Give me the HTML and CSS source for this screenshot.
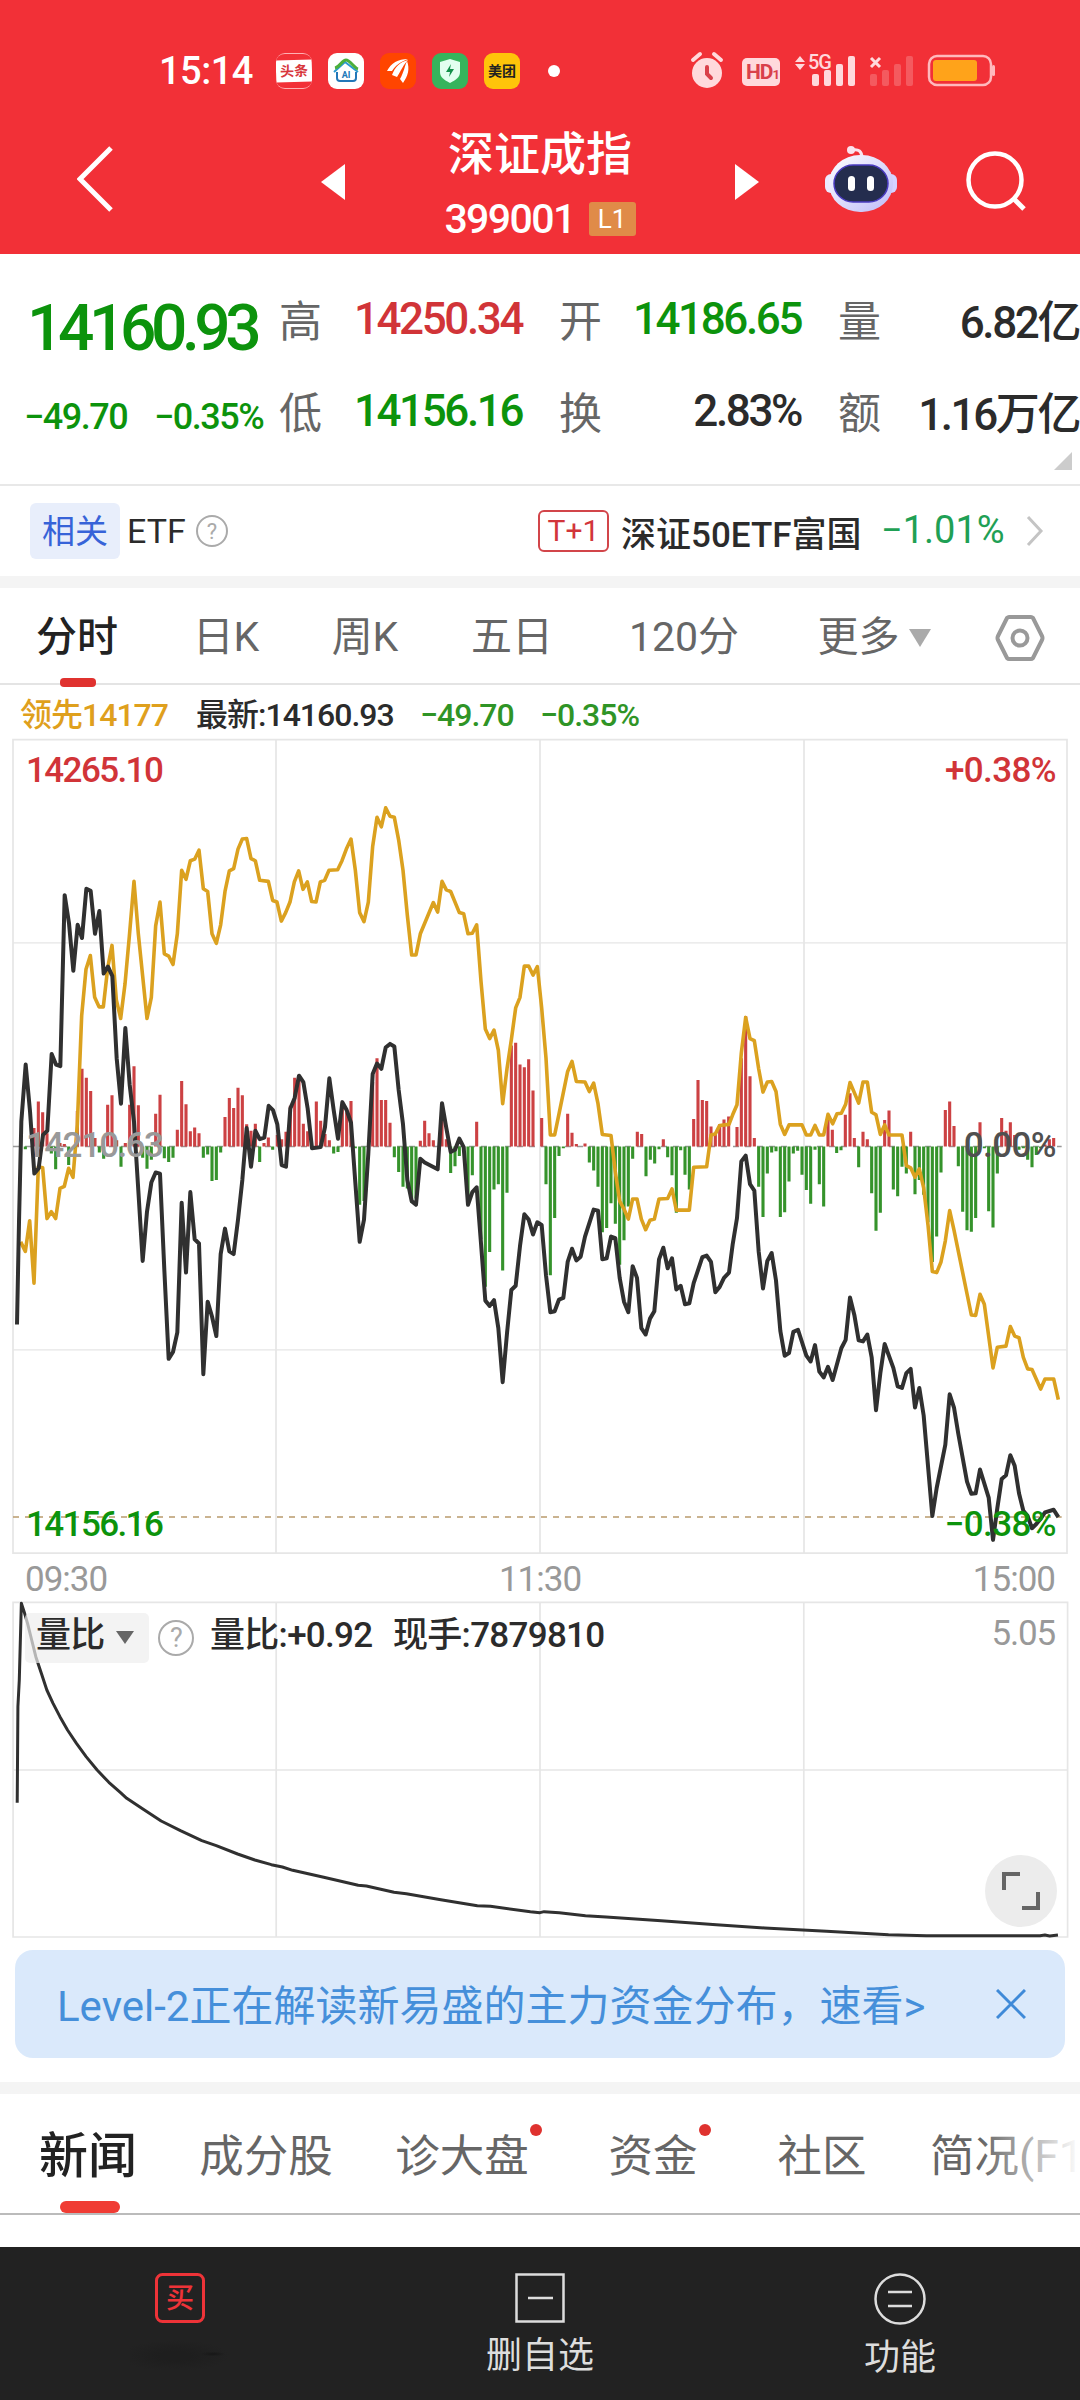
FILE: index.html
```html
<!DOCTYPE html>
<html lang="zh-CN">

<head>
    <meta charset="UTF-8">
    <meta name="viewport" content="width=device-width, initial-scale=1.0">
    <title>深证成指</title>
    <link rel="stylesheet" href="styles.css">
</head>

<body>
    <header class="header">
        <div class="status">
            <span class="clock">15:14</span>
            <div class="apps">
                <span class="app app-news"><b>头条</b></span>
                <span class="app app-home">
                    <svg viewBox="0 0 36 36" fill="none" stroke-width="2">
                        <path d="M6 19L17 9l13 10" stroke="#2a9ad0" />
                        <path d="M7 15C12 14 14 7 18 7s8 8 12 9" stroke="#4caf3c" stroke-width="3" />
                        <path d="M9 19v6q0 3 3 3h13q3 0 3-3v-6" stroke="#2277b8" />
                    </svg>
                    <b>AI</b>
                </span>
                <span class="app app-wing">
                    <svg viewBox="0 0 36 36" fill="#fff">
                        <path d="M7 18C11 10 18 6 28 6 20 9 15 13 12 18z" />
                        <path d="M12 22C15 14 20 9 28 7 23 12 21 18 17 24z" />
                        <path d="M20 26C24 19 25 12 27 8c3 8 1 15-4 22z" />
                    </svg>
                </span>
                <span class="app app-shield">
                    <svg viewBox="0 0 36 36">
                        <path d="M18 6l10 3v10c0 5-4 8-10 11C12 27 8 24 8 19V9z" fill="#e2fff0" />
                        <path d="M19 11l-5 8h4l-1 5 5-8h-4z" fill="#13904a" />
                    </svg>
                </span>
                <span class="app app-food"><b>美团</b></span>
            </div>
            <i class="more-dot"></i>
            <svg class="status-icons" width="310" height="46" viewBox="0 0 310 46">
                <g fill="#ffd9dc">
                    <circle cx="17" cy="25" r="15" />
                    <path d="M3 12l7-6M31 12l-7-6" stroke="#ffd9dc" stroke-width="4" stroke-linecap="round" />
                    <path d="M17 19v7l4 4" stroke="#d9404a" stroke-width="4" fill="none" stroke-linecap="round" />
                    <rect x="52" y="10" width="38" height="28" rx="5" />
                    <path d="M105 14l5-6 5 6zM105 16l5 6 5-6z" />
                    <rect x="122" y="26" width="7" height="12" rx="2" />
                    <rect x="134" y="22" width="7" height="16" rx="2" />
                    <rect x="146" y="16" width="7" height="22" rx="2" />
                    <rect x="158" y="8" width="7" height="30" rx="2" />
                </g>
                <text x="56" y="31" class="hd">HD<tspan class="hd-sub">1</tspan></text>
                <text x="118" y="21" class="five-g">5G</text>
                <path d="M181 10l9 9M190 10l-9 9" stroke="#ffd9dc" stroke-width="3" />
                <g fill="#fff" opacity=".2">
                    <rect x="180" y="26" width="7" height="12" rx="2" />
                    <rect x="192" y="22" width="7" height="16" rx="2" />
                    <rect x="204" y="16" width="7" height="22" rx="2" />
                    <rect x="216" y="8" width="7" height="30" rx="2" />
                </g>
                <rect x="239" y="8" width="62" height="29" rx="8" fill="none" stroke="#ffb9bd" stroke-width="2.5" />
                <rect x="243" y="12" width="44" height="21" rx="3" fill="#ffa31a" />
                <rect x="302" y="17" width="3" height="11" rx="1.5" fill="#ffb9bd" />
            </svg>
        </div>
        <nav class="nav">
            <svg class="back" width="36" height="66" viewBox="0 0 36 66" fill="none" stroke="#fff" stroke-width="5">
                <path d="M34 2L3 33l31 31" />
            </svg>
            <svg class="prev" width="24" height="36" viewBox="0 0 24 36" fill="#fff">
                <path d="M24 0v36L0 18z" />
            </svg>
            <div class="title">
                <h1>深证成指</h1>
                <p><span class="code">399001</span><span class="level">L1</span></p>
            </div>
            <svg class="next" width="24" height="36" viewBox="0 0 24 36" fill="#fff">
                <path d="M0 0v36l24-18z" />
            </svg>
            <svg class="robot" width="72" height="68" viewBox="0 0 72 68">
                <defs>
                    <linearGradient id="shell" x1="0" y1="0" x2="1" y2="1">
                        <stop offset="0" stop-color="#fff" />
                        <stop offset="1" stop-color="#bdbaf8" />
                    </linearGradient>
                </defs>
                <path d="M27 5q10-2 10 8" fill="none" stroke="#fbe3ee" stroke-width="3" />
                <circle cx="26" cy="5" r="4" fill="#fbe3ee" />
                <rect x="0" y="29" width="12" height="19" rx="6" fill="#eceaff" />
                <rect x="60" y="29" width="12" height="19" rx="6" fill="#d5d2ff" />
                <rect x="4" y="10" width="64" height="57" rx="31" ry="28" fill="url(#shell)" />
                <rect x="9" y="20" width="54" height="37" rx="19" fill="#242d4e" stroke="#4a3bc0" stroke-width="1.5" />
                <rect x="23" y="31" width="7" height="15" rx="3.5" fill="#fff" />
                <rect x="42" y="31" width="7" height="15" rx="3.5" fill="#fff" />
            </svg>
            <svg class="search" width="62" height="62" viewBox="0 0 62 62" fill="none" stroke="#fff" stroke-width="4.5">
                <circle cx="29" cy="29" r="26.5" />
                <path d="M48 48l10 10" stroke-width="5" />
            </svg>
        </nav>
    </header>

    <section class="quote">
        <div class="price down">
            <strong>14160.93</strong>
            <p><span>−49.70</span><span>−0.35%</span></p>
        </div>
        <dl class="stats">
            <div><dt>高</dt><dd class="up">14250.34</dd></div>
            <div><dt>开</dt><dd class="down">14186.65</dd></div>
            <div><dt>量</dt><dd>6.82亿</dd></div>
            <div><dt>低</dt><dd class="down">14156.16</dd></div>
            <div><dt>换</dt><dd>2.83%</dd></div>
            <div><dt>额</dt><dd>1.16万亿</dd></div>
        </dl>
        <i class="corner"></i>
    </section>

    <section class="related">
        <span class="related-tag">相关</span>
        <span class="etf">ETF</span>
        <span class="help">?</span>
        <span class="t1">T+1</span>
        <span class="fund">深证50ETF富国</span>
        <span class="fund-change">−1.01%</span>
        <svg width="18" height="32" viewBox="0 0 18 32" fill="none" stroke="#c4c4c4" stroke-width="3">
            <path d="M2 2l13 14L2 30" />
        </svg>
    </section>

    <div class="periods">
        <span class="active">分时</span>
        <span>日K</span>
        <span>周K</span>
        <span>五日</span>
        <span>120分</span>
        <span class="more">更多<i></i></span>
        <span class="settings">
            <svg width="50" height="48" viewBox="0 0 50 48" fill="none" stroke="#999" stroke-width="4">
                <path d="M14 3h22q1 0 2 1l9 18q1 2 0 4l-9 18q-1 1-2 1H14q-1 0-2-1L3 26q-1-2 0-4l9-18q1-1 2-1z" />
                <circle cx="25" cy="24" r="7.5" />
            </svg>
        </span>
    </div>

    <div class="legend">
        <span class="lead">领先14177</span>
        <span class="last">最新:14160.93</span>
        <span class="diff">−49.70</span>
        <span class="rate">−0.35%</span>
    </div>

    <section class="chart">
        <svg width="1080" height="830" viewBox="0 0 3240 1568" preserveAspectRatio="none" fill="none">
            <g class="grid">
                <path d="M39 18H3201V1555H39zM828 18V1555M1620 18V1555M2412 18V1555" />
                <path d="M39 402H3201M39 1171H3201" class="thin" />
            </g>
            <path d="M39 787H3185" class="zero" />
            <path id="bars-up" class="bars-up" />
            <path id="bars-down" class="bars-down" />
            <path d="M39 1487H3185" class="low" />
            <polyline class="line-lead" points="62,967 76,985 89,927 102,1045 115,825 128,827 141,923 154,910 167,923 180,866 193,862 206,828 219,845 232,745 245,540 258,452 271,426 284,505 297,523 310,523 323,450 336,407 349,510 362,545 375,480 388,390 402,286 415,385 428,465 441,545 454,505 467,370 480,325 493,423 506,427 519,443 532,385 545,265 558,282 571,247 584,244 597,227 610,300 623,305 636,385 649,403 662,368 675,305 688,266 701,262 714,225 727,206 740,205 753,243 766,247 779,284 805,286 818,322 831,325 844,361 857,345 870,325 883,287 896,266 909,301 922,287 935,324 948,325 961,287 974,284 987,265 1013,264 1026,247 1039,225 1053,206 1066,265 1079,345 1092,362 1105,325 1118,220 1131,165 1144,183 1157,147 1170,163 1183,165 1196,208 1209,265 1222,350 1235,425 1248,425 1261,385 1300,326 1313,344 1326,286 1339,302 1352,305 1378,345 1391,347 1404,385 1417,384 1430,368 1443,475 1456,565 1469,583 1482,567 1495,605 1508,706 1521,640 1534,585 1547,525 1560,505 1573,446 1586,446 1599,463 1612,447 1625,525 1638,620 1651,765 1664,765 1677,725 1703,645 1716,626 1729,664 1755,665 1768,683 1781,667 1794,706 1807,764 1833,766 1846,835 1859,890 1872,905 1885,924 1898,886 1911,886 1924,924 1937,944 1950,926 1963,924 1977,886 2003,885 2016,867 2029,907 2068,907 2081,826 2120,825 2133,765 2146,763 2159,747 2187,745 2198,727 2211,708 2224,610 2237,543 2250,583 2263,587 2276,640 2289,684 2302,665 2315,664 2328,683 2341,745 2354,764 2367,746 2406,746 2419,765 2432,765 2445,747 2458,765 2471,765 2484,726 2498,744 2511,725 2524,724 2537,707 2550,666 2563,685 2576,705 2589,665 2602,665 2615,722 2628,727 2641,764 2654,746 2667,765 2706,765 2719,823 2732,827 2745,845 2758,829 2771,865 2784,935 2797,1023 2810,1025 2823,1005 2836,965 2849,908 2862,945 2901,1065 2914,1105 2927,1106 2940,1066 2953,1085 2979,1205 2992,1166 3018,1164 3031,1127 3044,1145 3057,1148 3070,1185 3083,1207 3096,1208 3122,1245 3135,1226 3161,1226 3175,1265" />
            <polyline class="line-price" points="51,1123 57,930 64,740 77,632 90,720 103,838 116,828 129,765 142,757 155,612 168,632 181,635 194,312 207,365 220,455 233,368 246,393 259,300 272,304 285,385 298,342 311,460 324,447 337,465 350,620 363,706 376,563 389,670 402,740 415,870 428,1003 441,910 454,855 467,836 480,838 493,1020 506,1188 519,1175 532,1138 545,893 558,1025 571,873 584,962 597,970 610,1217 623,1080 636,1108 649,1145 662,990 675,942 688,985 701,990 714,925 727,850 740,752 753,825 766,757 779,773 793,770 806,710 819,718 832,745 845,822 858,825 871,715 884,695 897,653 910,665 923,715 936,790 962,788 975,750 988,658 1001,718 1014,772 1027,703 1040,718 1053,742 1066,855 1079,967 1092,925 1105,800 1118,650 1131,630 1144,640 1157,600 1170,593 1183,598 1196,680 1209,745 1222,850 1235,890 1248,897 1261,810 1274,817 1313,830 1326,705 1339,752 1352,797 1365,793 1378,772 1391,788 1404,897 1417,873 1430,864 1443,970 1456,1078 1469,1088 1482,1077 1495,1130 1508,1232 1521,1140 1534,1058 1547,1050 1560,975 1573,915 1586,925 1599,953 1612,930 1625,935 1638,1030 1651,1100 1664,1098 1677,1076 1690,1073 1703,1005 1716,980 1729,1002 1742,995 1755,957 1781,906 1794,908 1807,1000 1820,998 1833,957 1846,960 1859,1035 1872,1080 1885,1100 1898,1013 1911,1035 1924,1130 1937,1142 1950,1112 1963,1098 1977,1000 1990,978 2003,1017 2016,998 2029,1057 2042,1050 2055,1085 2068,1083 2081,1045 2107,996 2120,993 2133,1005 2146,1062 2159,1052 2172,1035 2187,1025 2198,972 2211,922 2224,815 2237,804 2250,858 2263,870 2276,985 2289,1055 2302,1003 2315,988 2328,1040 2341,1135 2354,1182 2367,1177 2380,1137 2394,1133 2419,1182 2432,1193 2445,1162 2458,1212 2471,1223 2484,1203 2498,1228 2524,1168 2537,1152 2550,1072 2563,1105 2576,1153 2589,1155 2602,1142 2615,1185 2628,1285 2641,1215 2654,1160 2680,1205 2693,1240 2706,1243 2719,1215 2732,1207 2745,1280 2758,1243 2771,1295 2797,1485 2810,1432 2836,1350 2849,1255 2862,1280 2875,1330 2901,1420 2914,1443 2927,1442 2940,1397 2966,1450 2979,1530 2992,1470 3005,1415 3018,1408 3031,1370 3044,1390 3057,1442 3070,1475 3083,1485 3096,1508 3109,1500 3122,1490 3135,1478 3161,1473 3175,1487" />
        </svg>
        <div class="scale scale-left">
            <span class="up">14265.10</span>
            <span class="base">14210.63</span>
            <span class="down">14156.16</span>
        </div>
        <div class="scale scale-right">
            <span class="up">+0.38%</span>
            <span class="mid">0.00%</span>
            <span class="down">−0.38%</span>
        </div>
    </section>

    <div class="times">
        <span>09:30</span>
        <span>11:30</span>
        <span>15:00</span>
    </div>

    <section class="volume">
        <svg width="1080" height="340" viewBox="0 180 1568 1020" preserveAspectRatio="none" fill="none">
            <g class="grid">
                <path d="M19 187H1550V1191H19zM19 690H1550M401 187V1191M784 187V1191M1167 187V1191" />
            </g>
            <polyline class="line-ratio" points="25,788 26,500 28,420 31,190 35,215 40,250 46,300 52,350 60,400 68,450 77,490 87,530 98,570 111,610 125,650 141,690 158,727 175,758 184,775 208,808 234,843 262,872 293,902 314,917 345,942 370,960 394,974 410,981 425,991 470,1012 520,1036 532,1038 572,1057 590,1061 640,1079 693,1097 712,1099 770,1115 784,1118 790,1115 812,1118 850,1127 880,1131 960,1142 1040,1154 1110,1164 1200,1174 1290,1184 1345,1187 1510,1187 1517,1185 1524,1188 1536,1185" />
        </svg>
        <div class="volume-info">
            <span class="picker">量比<i></i></span>
            <span class="help help-lg">?</span>
            <span class="ratio">量比:+0.92</span>
            <span>现手:7879810</span>
        </div>
        <span class="volume-max">5.05</span>
        <span class="expand">
            <svg width="42" height="42" viewBox="0 0 42 42" fill="none" stroke="#666" stroke-width="4">
                <path d="M4 20V4h16M38 22v16H22" />
            </svg>
        </span>
    </section>

    <div class="banner">
        <span>Level-2正在解读新易盛的主力资金分布，速看&gt;</span>
        <svg width="30" height="30" viewBox="0 0 30 30" fill="none" stroke="#3f8ad8" stroke-width="3">
            <path d="M1 1l28 28M29 1L1 29" />
        </svg>
    </div>

    <div class="topics">
        <span class="active">新闻</span>
        <span>成分股</span>
        <span><em>诊大盘<i></i></em></span>
        <span><em>资金<i></i></em></span>
        <span>社区</span>
        <span class="last-topic">简况(F10)</span>
    </div>

    <footer class="toolbar">
        <div>
            <svg width="50" height="50" viewBox="0 0 50 50" fill="none">
                <rect x="1.5" y="1.5" width="47" height="47" rx="6" stroke="#ee3338" stroke-width="3" />
                <text x="25" y="35" class="buy">买</text>
            </svg>
            <i class="smudge"></i>
        </div>
        <div>
            <svg width="50" height="50" viewBox="0 0 50 50" fill="none" stroke="#ddd" stroke-width="2.5">
                <path d="M1.5 1.5h47v47h-47zM13 25h25" />
            </svg>
            <span>删自选</span>
        </div>
        <div>
            <svg width="52" height="52" viewBox="0 0 52 52" fill="none" stroke="#ddd" stroke-width="2.5">
                <circle cx="26" cy="26" r="24.5" />
                <path d="M14 19h24M14 33h24" />
            </svg>
            <span>功能</span>
        </div>
    </footer>
    <script src="chart.js"></script>
</body>

</html>
```

FILE: styles.css
```css
* {
    box-sizing: border-box;
}

body {
    margin: 0;
    width: 1080px;
    height: 2400px;
    overflow: hidden;
    background-color: #fff;
    color: #2b2b2b;
    font-family: Roboto, "Noto Sans CJK SC", sans-serif;
}

h1,
p,
dl,
dd {
    margin: 0;
}

span,
strong {
    white-space: nowrap;
}

svg {
    display: block;
    flex: none;
}

.up {
    color: #d13438;
}

.down {
    color: #0c930c;
}

/* header */
.header {
    height: 254px;
    padding-top: 48px;
    background-color: #f23037;
    color: #fff;
}

.status {
    display: flex;
    align-items: center;
    height: 46px;
    padding-left: 159px;
}

.clock {
    width: 117px;
    font-size: 38px;
    font-weight: 500;
    letter-spacing: -.5px;
}

.apps {
    display: flex;
    gap: 16px;
}

.app {
    position: relative;
    display: flex;
    align-items: center;
    justify-content: center;
    width: 36px;
    height: 36px;
    border-radius: 9px;
    overflow: hidden;
}

.app svg {
    width: 36px;
    height: 36px;
}

.app b {
    font-size: 14px;
    line-height: 22px;
}

.app-news {
    border-top: 1px solid #ffb0b3;
    border-bottom: 1px solid #ffb0b3;
}

.app-news b {
    width: 36px;
    background-color: #fff;
    color: #d8363c;
    text-align: center;
    transform: rotate(-2deg);
}

.app-home {
    background-color: #fff;
}

.app-home b {
    position: absolute;
    top: 11px;
    font-size: 9px;
    color: #2277b8;
}

.app-wing {
    background-color: #ff4500;
}

.app-shield {
    background-color: #36b45c;
}

.app-food {
    background-color: #ffc40a;
    color: #222;
}

.more-dot {
    width: 12px;
    height: 12px;
    margin-left: 28px;
    border-radius: 50%;
    background-color: #fff;
}

.status-icons {
    margin-left: 130px;
}

.hd {
    font-size: 21px;
    font-weight: 700;
    letter-spacing: -1px;
    fill: #d9404a;
}

.hd-sub {
    font-size: 13px;
}

.five-g {
    font-size: 20px;
    font-weight: 500;
    letter-spacing: -1px;
    fill: #ffd9dc;
}

.nav {
    display: flex;
    align-items: center;
    height: 160px;
    padding-top: 10px;
}

.back {
    margin-left: 77px;
}

.prev {
    margin-left: 208px;
    margin-top: 5px;
}

.next {
    margin-top: 5px;
}

.title {
    width: 390px;
    margin-top: 9px;
    text-align: center;
}

.title h1 {
    font-size: 46px;
    font-weight: 500;
    line-height: 60px;
}

.title p {
    display: flex;
    align-items: center;
    justify-content: center;
    gap: 14px;
    height: 50px;
    margin-top: 10px;
}

.code {
    font-size: 41px;
    font-weight: 500;
    letter-spacing: -1.6px;
}

.level {
    width: 47px;
    height: 34px;
    border-radius: 3px;
    background-color: #e08b48;
    font-size: 26px;
    line-height: 34px;
    text-align: center;
}

.robot {
    margin-left: 66px;
}

.search {
    margin-left: 69px;
    margin-top: 6px;
}

/* quote */
.quote {
    position: relative;
    display: flex;
    height: 232px;
    padding-top: 19px;
    border-bottom: 2px solid #e8e8e8;
}

.price {
    width: 280px;
    padding-left: 27px;
}

.price strong {
    display: block;
    height: 92px;
    padding-top: 19px;
    font-size: 64px;
    font-weight: 500;
    line-height: 74px;
    letter-spacing: -5.4px;
}

.price p {
    display: flex;
    gap: 27px;
    margin-left: -3px;
    font-size: 36px;
    font-weight: 500;
    line-height: 104px;
    letter-spacing: -1.5px;
}

.stats {
    display: grid;
    grid-template-columns: 242px 241px 240px;
    grid-template-rows: 92px 92px;
    column-gap: 38px;
}

.stats div {
    display: flex;
    align-items: center;
    justify-content: space-between;
    margin-left: -1px;
}

.stats dt {
    padding-bottom: 3px;
    color: #666;
    font-size: 43px;
}

.stats dd {
    font-size: 44px;
    font-weight: 500;
    letter-spacing: -2.4px;
    white-space: nowrap;
}

.corner {
    position: absolute;
    right: 8px;
    bottom: 14px;
    border-left: 18px solid transparent;
    border-bottom: 18px solid #ccc;
}

/* related etf */
.related {
    display: flex;
    align-items: center;
    height: 102px;
    padding-left: 30px;
    border-bottom: 12px solid #f4f4f4;
}

.related-tag {
    width: 90px;
    height: 56px;
    border-radius: 6px;
    background-color: #e8eefb;
    color: #3763d8;
    font-size: 33px;
    line-height: 57px;
    text-align: center;
}

.etf {
    width: 69px;
    margin-left: 7px;
    font-size: 34px;
}

.help {
    width: 32px;
    height: 32px;
    border: 2px solid #aaa;
    border-radius: 50%;
    color: #aaa;
    font-size: 22px;
    line-height: 29px;
    text-align: center;
}

.t1 {
    width: 71px;
    height: 42px;
    margin-left: 310px;
    border: 2px solid #d2454a;
    border-radius: 6px;
    color: #d2353a;
    font-size: 30px;
    line-height: 38px;
    text-align: center;
}

.fund {
    width: 261px;
    margin-left: 12px;
    font-size: 35px;
    font-weight: 500;
}

.fund-change {
    width: 144px;
    margin-left: -1px;
    margin-right: 1px;
    padding-bottom: 2px;
    color: #1fa055;
    font-size: 38px;
}

/* period tabs */
.periods {
    display: grid;
    grid-template-columns: 154px 144px 134px 160px 184px 196px 96px;
    height: 97px;
    border-bottom: 2px solid #e4e4e4;
    color: #666;
    font-size: 41px;
    line-height: 99px;
    text-align: center;
}

.periods .active {
    position: relative;
    color: #222;
    font-weight: 500;
}

.periods .active::after {
    content: "";
    position: absolute;
    left: 60px;
    bottom: 0;
    width: 36px;
    height: 9px;
    border-radius: 4px;
    background-color: #e0322f;
}

.more {
    display: flex;
    align-items: center;
    justify-content: center;
    gap: 9px;
}

.more i {
    border: 11px solid transparent;
    border-top: 18px solid #aaa;
    border-bottom: 0;
}

.settings {
    display: flex;
    align-items: center;
    justify-content: center;
}

.legend {
    display: flex;
    align-items: center;
    height: 45px;
    padding: 14px 0 0 20px;
    font-size: 32px;
    line-height: 30px;
    font-weight: 500;
}

.legend span {
    letter-spacing: -1px;
}

.lead {
    width: 176px;
    color: #dfa01d;
}

.last {
    width: 224px;
}

.diff {
    width: 120px;
    color: #2f9426;
}

.rate {
    color: #2f9426;
}

/* main chart */
.chart,
.volume {
    position: relative;
}

.chart path,
.chart polyline,
.volume path,
.volume polyline {
    vector-effect: non-scaling-stroke;
}

.grid {
    stroke: #e6e6e6;
    stroke-width: 1.7;
}

.thin {
    stroke-width: 1.2;
}

.zero {
    stroke: #999;
    stroke-width: 1.5;
    stroke-dasharray: 6 6;
}

.low {
    stroke: #b99a6c;
    stroke-width: 1.5;
    stroke-dasharray: 6 6;
}

.bars-up {
    stroke: #cc4143;
    stroke-width: 3.1;
}

.bars-down {
    stroke: #35932b;
    stroke-width: 3.1;
}

.line-lead {
    stroke: #dba11f;
    stroke-width: 3.6;
    stroke-linejoin: round;
}

.line-price {
    stroke: #303030;
    stroke-width: 4;
    stroke-linejoin: round;
}

.scale {
    position: absolute;
    top: 21px;
    bottom: 15px;
    display: flex;
    flex-direction: column;
    justify-content: space-between;
    font-size: 35px;
    font-weight: 500;
    line-height: 40px;
    letter-spacing: -1.6px;
}

.scale-left {
    left: 26px;
}

.scale-right {
    right: 24px;
    align-items: flex-end;
    letter-spacing: -.6px;
}

.base {
    margin-bottom: 4px;
    color: #999;
}

.mid {
    margin-bottom: 4px;
    color: #505050;
}

.times {
    display: grid;
    grid-template-columns: 1fr 1fr 1fr;
    height: 40px;
    padding: 0 25px;
    color: #999;
    font-size: 35px;
    line-height: 40px;
    letter-spacing: -1px;
}

.times span:nth-child(2) {
    text-align: center;
}

.times span:nth-child(3) {
    text-align: right;
}

/* volume ratio chart */
.line-ratio {
    stroke: #303030;
    stroke-width: 3;
    stroke-linejoin: round;
}

.volume-info {
    position: absolute;
    top: 13px;
    left: 25px;
    display: flex;
    align-items: center;
    height: 50px;
    font-size: 35px;
    font-weight: 500;
    line-height: 46px;
    letter-spacing: -.7px;
}

.volume-info > span {
    padding-bottom: 4px;
}

.volume-info .picker {
    display: flex;
    align-items: center;
    gap: 11px;
    width: 124px;
    height: 50px;
    padding-left: 11px;
    border-radius: 5px;
    background-color: rgba(238, 238, 238, .7);
}

.picker i {
    margin-top: 2px;
    border: 9px solid transparent;
    border-top: 13px solid #666;
    border-bottom: 0;
}

.volume-info .help-lg {
    width: 36px;
    height: 36px;
    margin: 0 16px 0 9px;
    padding: 0;
    font-size: 27px;
    font-weight: 400;
    line-height: 32px;
}

.ratio {
    width: 183px;
}

.volume-max {
    position: absolute;
    top: 13px;
    right: 25px;
    color: #999;
    font-size: 35px;
    letter-spacing: -1.2px;
}

.expand {
    position: absolute;
    right: 23px;
    bottom: 13px;
    display: flex;
    align-items: center;
    justify-content: center;
    width: 72px;
    height: 72px;
    border-radius: 50%;
    background-color: #ececec;
}

/* banner */
.banner {
    display: flex;
    align-items: center;
    justify-content: space-between;
    height: 108px;
    margin: 10px 15px 24px;
    padding: 0 39px 0 42px;
    border-radius: 18px;
    background-color: #dae9fb;
    color: #458fda;
    font-size: 42px;
}

.banner span {
    padding-bottom: 3px;
}

/* news tabs */
.topics {
    position: relative;
    display: grid;
    grid-template-columns: 176px 180px 212px 170px 168px 174px;
    height: 133px;
    overflow: hidden;
    border-top: 12px solid #f4f4f4;
    border-bottom: 2px solid #bbb;
    color: #666;
    font-size: 44.5px;
    line-height: 126px;
    text-align: center;
}

.topics::after {
    content: "";
    position: absolute;
    top: 0;
    right: 0;
    width: 100px;
    height: 119px;
    background: linear-gradient(to right, rgba(255, 255, 255, 0), #fff);
}

.topics .active {
    position: relative;
    height: 119px;
    color: #222;
    font-size: 49px;
    font-weight: 500;
}

.topics .active::after {
    content: "";
    position: absolute;
    left: 60px;
    bottom: 0;
    width: 60px;
    height: 12px;
    border-radius: 6px;
    background-color: #f03c34;
}

.topics em {
    position: relative;
    font-style: normal;
}

.topics em i {
    position: absolute;
    top: -7px;
    right: -13px;
    width: 12px;
    height: 12px;
    border-radius: 50%;
    background-color: #df322f;
}

.topics .last-topic {
    padding-left: 24px;
    text-align: left;
}

/* bottom toolbar */
.toolbar {
    display: grid;
    grid-template-columns: 1fr 1fr 1fr;
    height: 153px;
    margin-top: 32px;
    background-color: #222;
    color: #ddd;
    font-size: 36px;
}

.toolbar div {
    display: flex;
    flex-direction: column;
    align-items: center;
    padding-top: 26px;
}

.toolbar svg {
    margin-bottom: 10px;
}

.toolbar span {
    line-height: 46px;
}

.buy {
    fill: #ee3338;
    font-size: 28px;
    font-weight: 500;
    text-anchor: middle;
}

.smudge {
    width: 100px;
    height: 30px;
    margin-top: 7px;
    background: radial-gradient(ellipse at 83px 14px, #191919 3px, transparent 12px), radial-gradient(ellipse at 45px 16px, #1e1e1e 20%, transparent 70%);
}
```

FILE: chart.js
```javascript
// difference bars: x position, bar end (above 787 is up, below is down)
const ZERO = 787;
const bars = [
    [76, 792], [102, 752], [115, 702], [128, 722], [141, 762], [154, 800], [167, 830], [180, 780], [193, 782], [206, 822],
    [232, 720], [246, 640], [259, 657], [272, 682], [285, 771], [298, 798], [311, 810], [323, 708], [336, 690], [350, 775],
    [363, 825], [376, 780], [389, 708], [402, 635], [415, 709], [428, 808], [441, 829], [454, 812], [467, 725], [480, 689],
    [493, 809], [506, 816], [519, 808], [532, 755], [545, 663], [558, 707], [571, 758], [584, 751], [597, 762],
    [610, 808], [623, 802], [636, 852], [649, 850], [662, 798], [675, 731], [688, 695], [701, 714], [714, 676], [727, 690],
    [740, 745], [753, 757], [766, 744], [779, 816], [792, 780], [805, 770], [818, 793], [832, 765], [845, 773], [858, 759],
    [871, 710], [884, 657], [897, 655], [910, 744], [923, 758], [949, 702], [962, 738], [975, 763], [988, 775],
    [1001, 800], [1014, 797], [1027, 710], [1040, 722], [1053, 701], [1066, 790], [1079, 897], [1092, 890],
    [1118, 665], [1131, 620], [1144, 699], [1157, 699], [1170, 742], [1183, 807], [1196, 835], [1209, 863], [1222, 866],
    [1235, 893], [1248, 885], [1261, 776], [1274, 738], [1287, 762], [1300, 775], [1326, 715], [1339, 773],
    [1352, 837], [1365, 824], [1378, 805], [1391, 796], [1404, 880], [1417, 841], [1430, 740], [1443, 962], [1456, 1052],
    [1469, 986], [1482, 868], [1495, 858], [1508, 1021], [1521, 874], [1534, 596], [1547, 591], [1560, 632], [1573, 637],
    [1586, 622], [1599, 681], [1625, 733], [1638, 858], [1651, 1030], [1664, 922], [1677, 805], [1690, 790],
    [1703, 725], [1716, 761], [1729, 782], [1755, 781], [1768, 817], [1781, 832], [1794, 863], [1807, 949], [1820, 941],
    [1833, 894], [1846, 933], [1859, 1010], [1872, 964], [1885, 900], [1898, 810], [1912, 759], [1925, 763],
    [1938, 843], [1951, 812], [1964, 819], [1977, 792], [1990, 773], [2003, 807], [2016, 841], [2029, 912], [2042, 794],
    [2055, 840], [2068, 868], [2081, 735], [2094, 661], [2107, 699], [2120, 701], [2133, 749], [2146, 763], [2159, 745],
    [2172, 736], [2186, 730], [2211, 750], [2224, 620], [2237, 541], [2250, 654], [2263, 771], [2276, 863],
    [2289, 920], [2302, 838], [2315, 798], [2328, 796], [2341, 920], [2354, 911], [2367, 853], [2380, 800], [2393, 795],
    [2406, 840], [2419, 869], [2432, 895], [2445, 793], [2458, 858], [2471, 900], [2484, 735], [2497, 755], [2510, 799],
    [2523, 794], [2536, 727], [2550, 686], [2563, 771], [2576, 826], [2589, 759], [2602, 773], [2615, 875], [2628, 946],
    [2641, 912], [2654, 737], [2667, 719], [2680, 868], [2693, 881], [2706, 825], [2719, 838], [2732, 759], [2745, 877],
    [2758, 850], [2771, 878], [2784, 930], [2797, 1005], [2810, 957], [2823, 836], [2836, 718], [2849, 702], [2862, 748],
    [2875, 824], [2888, 910], [2901, 945], [2914, 948], [2927, 922], [2940, 741], [2953, 790], [2966, 909], [2979, 940],
    [2992, 838], [3005, 733], [3018, 757], [3031, 741], [3044, 765], [3057, 793], [3070, 790], [3083, 812], [3096, 826],
    [3109, 803], [3122, 790], [3135, 783], [3148, 773], [3161, 771]
];

function barPath(list) {
    return list.map(([x, y]) => `M${x} ${ZERO}V${y}`).join('');
}

document.getElementById('bars-up').setAttribute('d', barPath(bars.filter(b => b[1] < ZERO)));
document.getElementById('bars-down').setAttribute('d', barPath(bars.filter(b => b[1] >= ZERO)));
```
